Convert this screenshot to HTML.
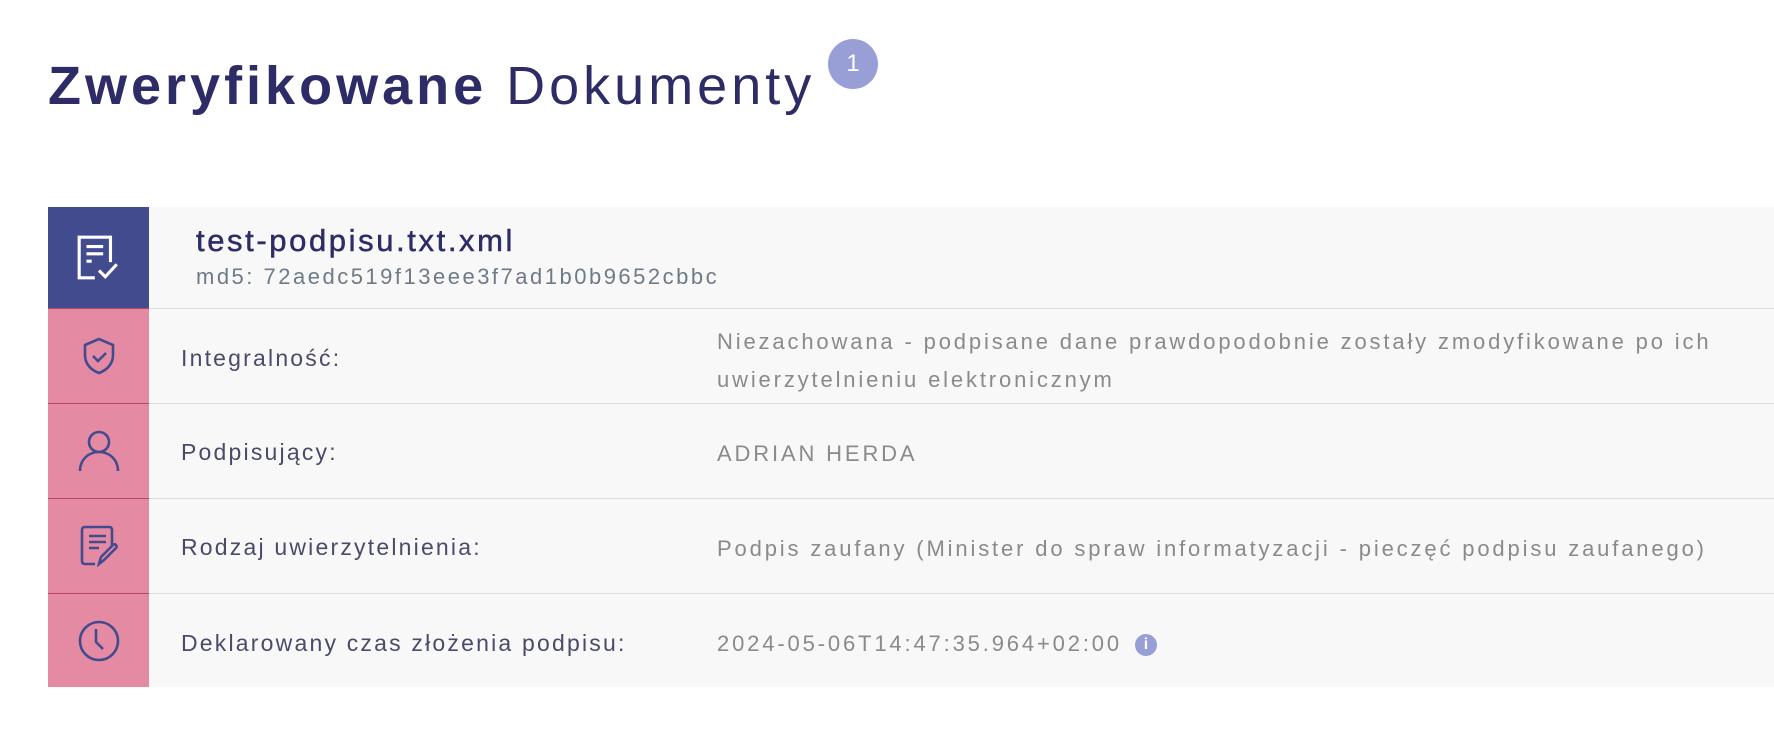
<!DOCTYPE html>
<html><head><meta charset="utf-8"><style>
*{margin:0;padding:0;box-sizing:border-box}
body{width:1774px;height:750px;background:#fff;font-family:"Liberation Sans",sans-serif;position:relative;overflow:hidden}
h1{position:absolute;left:48px;top:55px;font-size:54px;color:#2d2c66;font-weight:400;letter-spacing:4px;white-space:nowrap}
h1 b{font-weight:700}
.badge{position:absolute;left:828px;top:39px;width:50px;height:50px;border-radius:50%;background:#989fd6;color:#fff;font-size:24px;text-align:center;line-height:50px}
.panel{position:absolute;left:48px;top:207px;width:1726px;height:480px;background:#f8f8f8}
.ic{position:absolute;left:0;width:101px;display:flex;align-items:center;justify-content:center}
.row{position:absolute;left:101px;right:0;border-top:1px solid #dcdcdc}
.lab{position:absolute;left:32px;font-size:23px;color:#4a4a6a;letter-spacing:2.2px}
.val{position:absolute;left:568px;font-size:22px;color:#8a8a8a;letter-spacing:2.85px;line-height:38px;white-space:nowrap}
</style></head><body>
<h1><b>Zweryfikowane</b> Dokumenty</h1>
<div class="badge">1</div>
<div class="panel">
 <div class="ic" style="top:0;height:101px;background:#434b8f">
  <svg width="46" height="48" viewBox="0 0 44 46" fill="none" stroke="#fff" stroke-width="3"><path d="M18 42H3V3h30v24"/><path d="M10 12h16M10 19h16M10 26h5"/><path d="M22 35l6 6 11-12"/></svg>
 </div>
 <div class="ic" style="top:101px;height:95px;background:#e48aa2;border-top:1px solid #b8485f">
  <svg width="36" height="40" viewBox="0 0 36 40" fill="none" stroke="#434b8f" stroke-width="2.6"><path d="M18 3L4 9v10c0 9 6 15 14 18 8-3 14-9 14-18V9z"/><path d="M12 20l5 5 8-8"/></svg>
 </div>
 <div class="ic" style="top:196px;height:95px;background:#e48aa2;border-top:1px solid #b8485f">
  <svg width="44" height="44" viewBox="0 0 44 44" fill="none" stroke="#434b8f" stroke-width="2.6"><circle cx="22" cy="13" r="10"/><path d="M3 42c0-11 8-19 19-19s19 8 19 19"/></svg>
 </div>
 <div class="ic" style="top:291px;height:95px;background:#e48aa2;border-top:1px solid #b8485f">
  <svg width="40" height="42" viewBox="0 0 40 42" fill="none" stroke="#434b8f" stroke-width="2.6"><path d="M16 39H6c-2 0-3-1-3-3V5c0-2 1-3 3-3h24c2 0 3 1 3 3v16"/><path d="M10 11h17M10 17h17M10 23h10"/><path d="M20 39l2-7 12-12c2-2 5 1 3 3L25 35z"/></svg>
 </div>
 <div class="ic" style="top:386px;height:94px;background:#e48aa2;border-top:1px solid #b8485f">
  <svg width="44" height="44" viewBox="0 0 44 44" fill="none" stroke="#434b8f" stroke-width="2.6"><circle cx="22" cy="22" r="19"/><path d="M19 10v13l7 7"/></svg>
 </div>
 <div style="position:absolute;left:148px;top:16px;font-size:31px;color:#2d2c66;letter-spacing:2.6px;-webkit-text-stroke:0.5px #2d2c66">test-podpisu.txt.xml</div>
 <div style="position:absolute;left:148px;top:57px;font-size:22px;color:#6e7a86;letter-spacing:2.5px">md5: 72aedc519f13eee3f7ad1b0b9652cbbc</div>
 <div class="row" style="top:101px;height:95px"><div class="lab" style="top:36px">Integralność:</div><div class="val" style="top:14px">Niezachowana - podpisane dane prawdopodobnie zostały zmodyfikowane po ich<br>uwierzytelnieniu elektronicznym</div></div>
 <div class="row" style="top:196px;height:95px"><div class="lab" style="top:35px">Podpisujący:</div><div class="val" style="top:31px">ADRIAN HERDA</div></div>
 <div class="row" style="top:291px;height:95px"><div class="lab" style="top:35px">Rodzaj uwierzytelnienia:</div><div class="val" style="top:31px">Podpis zaufany (Minister do spraw informatyzacji - pieczęć podpisu zaufanego)</div></div>
 <div class="row" style="top:386px;height:94px"><div class="lab" style="top:36px">Deklarowany czas złożenia podpisu:</div><div class="val" style="top:31px">2024-05-06T14:47:35.964+02:00 <span style="display:inline-block;width:22px;height:22px;border-radius:50%;background:#989fd6;color:#fff;font-size:16px;line-height:22px;text-align:center;font-weight:700;letter-spacing:0;vertical-align:2px;margin-left:4px">i</span></div></div>
</div>
</body></html>
